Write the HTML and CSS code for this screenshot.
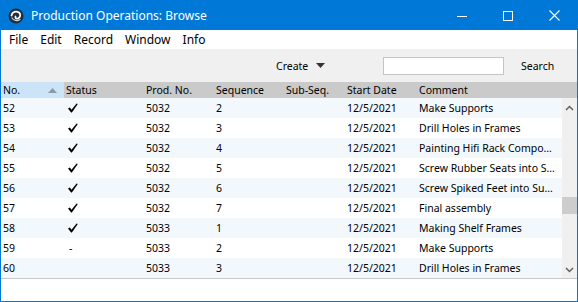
FILE: index.html
```html
<!DOCTYPE html>
<html>
<head>
<meta charset="utf-8">
<link rel="stylesheet" href="styles.css">
</head>
<body>
<div class="window">
  <div class="titlebar">
    <svg class="app-icon" width="16" height="16" viewBox="0 0 16 16">
      <circle cx="8" cy="8" r="7.5" fill="#1f2d3d"/>
      <path d="M3.5 7.5 C4 4 8 2.5 11 4.5 C13 6 12.5 9.5 10 10.5 C8.5 11 7 10 7.5 8.5" fill="none" stroke="#ffffff" stroke-width="1.8" stroke-linecap="round"/>
      <path d="M4 10 C5.5 12.5 9 13.5 12 11.5" fill="none" stroke="#c8d4de" stroke-width="1.2" stroke-linecap="round"/>
    </svg>
    <span class="title">Production Operations: Browse</span>
    <div class="controls">
      <span class="ctl"><svg width="10" height="10" viewBox="0 0 10 10"><path d="M0 5.5H10" stroke="#fff" stroke-width="1"/></svg></span>
      <span class="ctl"><svg width="10" height="10" viewBox="0 0 10 10"><rect x="0.5" y="0.5" width="9" height="9" fill="none" stroke="#fff" stroke-width="1"/></svg></span>
      <span class="ctl"><svg width="11" height="11" viewBox="0 0 11 11"><path d="M0.5 0.5L10.5 10.5M10.5 0.5L0.5 10.5" stroke="#fff" stroke-width="1.1"/></svg></span>
    </div>
  </div>
  <div class="menubar">
    <span>File</span><span>Edit</span><span>Record</span><span>Window</span><span>Info</span>
  </div>
  <div class="toolbar">
    <span class="create">Create <svg width="9" height="5" viewBox="0 0 9 5"><path d="M0 0H9L4.5 5Z" fill="#333"/></svg></span>
    <span class="search-box"></span>
    <span class="search-btn">Search</span>
  </div>
  <div class="header">
    <div class="hcell sorted">No.<svg class="sort" width="9" height="5" viewBox="0 0 9 5"><path d="M0 5L4.5 0L9 5Z" fill="#8a9aa8"/></svg></div>
    <div class="hcell">Status</div>
    <div class="hcell">Prod. No.</div>
    <div class="hcell">Sequence</div>
    <div class="hcell">Sub-Seq.</div>
    <div class="hcell">Start Date</div>
    <div class="hcell">Comment</div>
  </div>
  <div class="body">
    <div class="rows">
      <div class="row alt"><span>52</span><span class="chk"><svg width="10" height="10" viewBox="0 0 10 10"><path d="M0 5.6L1.9 4.6L3.5 6.8L8.6 0.4L9.8 1.1L3.9 9.6L3.1 9.6Z" fill="#000"/></svg></span><span>5032</span><span>2</span><span></span><span>12/5/2021</span><span class="cm">Make Supports</span></div>
      <div class="row"><span>53</span><span class="chk"><svg width="10" height="10" viewBox="0 0 10 10"><path d="M0 5.6L1.9 4.6L3.5 6.8L8.6 0.4L9.8 1.1L3.9 9.6L3.1 9.6Z" fill="#000"/></svg></span><span>5032</span><span>3</span><span></span><span>12/5/2021</span><span class="cm">Drill Holes in Frames</span></div>
      <div class="row alt"><span>54</span><span class="chk"><svg width="10" height="10" viewBox="0 0 10 10"><path d="M0 5.6L1.9 4.6L3.5 6.8L8.6 0.4L9.8 1.1L3.9 9.6L3.1 9.6Z" fill="#000"/></svg></span><span>5032</span><span>4</span><span></span><span>12/5/2021</span><span class="cm">Painting Hifi Rack Components</span></div>
      <div class="row"><span>55</span><span class="chk"><svg width="10" height="10" viewBox="0 0 10 10"><path d="M0 5.6L1.9 4.6L3.5 6.8L8.6 0.4L9.8 1.1L3.9 9.6L3.1 9.6Z" fill="#000"/></svg></span><span>5032</span><span>5</span><span></span><span>12/5/2021</span><span class="cm">Screw Rubber Seats into Shelves</span></div>
      <div class="row alt"><span>56</span><span class="chk"><svg width="10" height="10" viewBox="0 0 10 10"><path d="M0 5.6L1.9 4.6L3.5 6.8L8.6 0.4L9.8 1.1L3.9 9.6L3.1 9.6Z" fill="#000"/></svg></span><span>5032</span><span>6</span><span></span><span>12/5/2021</span><span class="cm">Screw Spiked Feet into Supports</span></div>
      <div class="row"><span>57</span><span class="chk"><svg width="10" height="10" viewBox="0 0 10 10"><path d="M0 5.6L1.9 4.6L3.5 6.8L8.6 0.4L9.8 1.1L3.9 9.6L3.1 9.6Z" fill="#000"/></svg></span><span>5032</span><span>7</span><span></span><span>12/5/2021</span><span class="cm">Final assembly</span></div>
      <div class="row alt"><span>58</span><span class="chk"><svg width="10" height="10" viewBox="0 0 10 10"><path d="M0 5.6L1.9 4.6L3.5 6.8L8.6 0.4L9.8 1.1L3.9 9.6L3.1 9.6Z" fill="#000"/></svg></span><span>5033</span><span>1</span><span></span><span>12/5/2021</span><span class="cm">Making Shelf Frames</span></div>
      <div class="row"><span>59</span><span class="dash">-</span><span>5033</span><span>2</span><span></span><span>12/5/2021</span><span class="cm">Make Supports</span></div>
      <div class="row alt"><span>60</span><span></span><span>5033</span><span>3</span><span></span><span>12/5/2021</span><span class="cm">Drill Holes in Frames</span></div>
    </div>
    <div class="scrollbar">
      <svg class="arrow" width="9" height="6" viewBox="0 0 9 6"><path d="M1 5L4.5 1.5L8 5" fill="none" stroke="#606060" stroke-width="1.5"/></svg>
      <div class="track"><div class="thumb"></div></div>
      <svg class="arrow" width="9" height="6" viewBox="0 0 9 6"><path d="M1 1L4.5 4.5L8 1" fill="none" stroke="#606060" stroke-width="1.5"/></svg>
    </div>
  </div>
  <div class="footer"></div>
</div>
</body>
</html>
```
FILE: styles.css
```css
* { box-sizing: border-box; }
html, body { margin: 0; padding: 0; background: #ffffff; }
body { font-family: "Noto Sans", "Open Sans", sans-serif; color: #000; }
.window {
  width: 578px;
  height: 302px;
  border: 1px solid #0078d7;
  display: flex;
  flex-direction: column;
  overflow: hidden;
}
.titlebar {
  height: 29px;
  background: #0078d7;
  display: flex;
  align-items: center;
  color: #fff;
  font-size: 12px;
  padding-left: 7px;
}
.app-icon { margin-right: 7px; }
.title { flex: 1; }
.controls { display: flex; height: 100%; }
.ctl {
  width: 46px;
  display: flex;
  align-items: center;
  justify-content: center;
}
.menubar {
  height: 19px;
  display: flex;
  align-items: center;
  font-size: 12px;
  padding-left: 8px;
}
.menubar span { margin-right: 12px; }
.toolbar {
  height: 33px;
  background: #f0f0f0;
  display: flex;
  align-items: center;
  font-size: 10.5px;
}
.create {
  margin-left: 275px;
  width: 107px;
  display: flex;
  align-items: center;
  gap: 8px;
}
.search-box {
  width: 121px;
  height: 18px;
  background: #fff;
  border: 1px solid #c4c4c4;
}
.search-btn { margin-left: 17px; }
.header {
  height: 16px;
  background: #cacaca;
  display: grid;
  grid-template-columns: 63px 80px 70px 70px 61px 72px 1fr;
  font-size: 10.5px;
  align-items: stretch;
}
.hcell {
  padding-left: 2px;
  display: flex;
  align-items: center;
}
.sorted {
  background: #cce4f7;
  justify-content: space-between;
  padding-right: 7px;
}
.body {
  display: flex;
  height: 181px;
  border-bottom: 1px solid #c8c8c8;
}
.rows { width: 561px; }
.row {
  height: 20px;
  display: grid;
  grid-template-columns: 63px 80px 70px 70px 61px 72px 1fr;
  align-items: center;
  font-size: 10.5px;
  line-height: 14px;
}
.row span { padding-left: 2px; white-space: nowrap; overflow: hidden; }
.row.alt { background: #f3f8fd; }
.row .chk { padding-left: 4px; display: flex; align-items: center; height: 12px; }
.row .dash { padding-left: 5px; }
.row .cm { text-overflow: ellipsis; padding-right: 4px; }
.scrollbar {
  width: 15px;
  background: #f0f0f0;
  display: flex;
  flex-direction: column;
  align-items: center;
  padding: 7px 0 5px;
}
.track { flex: 1; width: 100%; padding-top: 86px; }
.thumb { height: 17px; background: #cdcdcd; }
.footer { flex: 1; background: #fff; }
```
